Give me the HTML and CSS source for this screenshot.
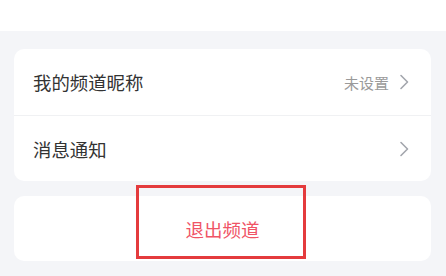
FILE: index.html
```html
<!DOCTYPE html>
<html lang="zh">
<head>
<meta charset="utf-8">
<link rel="stylesheet" href="styles.css">
</head>
<body>
<div class="top"></div>
<div class="page">
  <div class="card">
    <div class="row">
      <span class="label">我的频道昵称</span>
      <span class="right"><span class="value">未设置</span>
        <svg class="chev" width="10" height="16" viewBox="0 0 10 16"><path d="M2 1.5l6.5 6.5-6.5 6.5" fill="none" stroke="#a3a6ad" stroke-width="1.6" stroke-linecap="round" stroke-linejoin="round"/></svg>
      </span>
    </div>
    <div class="row">
      <span class="label">消息通知</span>
      <span class="right">
        <svg class="chev" width="10" height="16" viewBox="0 0 10 16"><path d="M2 1.5l6.5 6.5-6.5 6.5" fill="none" stroke="#a3a6ad" stroke-width="1.6" stroke-linecap="round" stroke-linejoin="round"/></svg>
      </span>
    </div>
  </div>
  <div class="card exit-card">
    <span class="exit">退出频道</span>
    <div class="highlight"></div>
  </div>
</div>
</body>
</html>
```
FILE: styles.css
```css
html, body {
  margin: 0;
  padding: 0;
  width: 446px;
  height: 276px;
  overflow: hidden;
  background: #f4f5f8;
  font-family: "Noto Sans CJK SC", "Noto Sans", sans-serif;
}
.top {
  height: 31px;
  background: #ffffff;
}
.page {
  padding: 18px 15px 0 14px;
  display: flex;
  flex-direction: column;
  gap: 15px;
}
.card {
  background: #ffffff;
  border-radius: 10px;
}
.row {
  height: 66px;
  display: flex;
  align-items: center;
  justify-content: space-between;
  padding: 0 22px 0 19px;
}
.row + .row {
  border-top: 1px solid #f0f1f3;
  height: 65px;
}
.label {
  font-size: 18.4px;
  color: #333333;
}
.right {
  display: flex;
  align-items: center;
  gap: 10px;
}
.value {
  font-size: 15px;
  color: #9a9a9a;
}
.chev {
  display: block;
}
.exit-card {
  position: relative;
  height: 65px;
  display: flex;
  align-items: center;
  justify-content: center;
}
.exit {
  font-size: 18.5px;
  color: #f05466;
}
.highlight {
  position: absolute;
  left: 122px;
  top: -11px;
  width: 164px;
  height: 68px;
  border: 3px solid #e43b3d;
}
```
